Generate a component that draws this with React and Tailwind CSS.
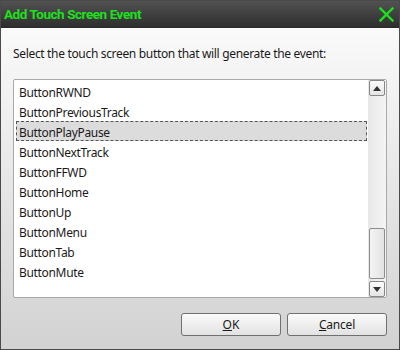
import React from "react";

const items = [
  "ButtonRWND",
  "ButtonPreviousTrack",
  "ButtonPlayPause",
  "ButtonNextTrack",
  "ButtonFFWD",
  "ButtonHome",
  "ButtonUp",
  "ButtonMenu",
  "ButtonTab",
  "ButtonMute",
];

function Arrow({ up }) {
  return (
    <svg width="8" height="5" viewBox="0 0 8 5">
      {up ? <polygon points="0,5 8,5 4,0" fill="#333" /> : <polygon points="0,0 8,0 4,5" fill="#333" />}
    </svg>
  );
}

export default function App() {
  return (
    <div
      className="w-[400px] h-[350px] flex flex-col border border-[#4a4a4a] bg-[linear-gradient(#fdfdfd,#d2d2d2)] overflow-hidden"
      style={{ fontFamily: '"Noto Sans", sans-serif' }}
    >
      <div className="h-[27px] flex items-center justify-between pl-[3px] pr-[5px] bg-[linear-gradient(#525252,#2e2e2e)] border-b border-[#2a2a2a]">
        <span
          className="text-[13.5px] font-bold text-[#1ee01e] leading-none pt-[1px] tracking-[-0.45px]"
          style={{ fontFamily: 'Roboto, sans-serif' }}
        >
          Add Touch Screen Event
        </span>
        <svg width="15" height="15" viewBox="0 0 15 15">
          <path d="M1.5 1.5 L13.5 13.5 M13.5 1.5 L1.5 13.5" stroke="#1ee01e" strokeWidth="2.4" strokeLinecap="square" />
        </svg>
      </div>
      <div className="flex-1 flex flex-col px-[12px]">
        <div className="mt-[17px] h-[18px] text-[12px] leading-[18px] text-[#1a1a1a] tracking-[-0.33px]">
          Select the touch screen button that will generate the event:
        </div>
        <div className="mt-[16px] h-[219px] flex border border-[#a8a8a8] rounded-[2px] bg-white">
          <div className="flex-1 flex flex-col pt-[1px] pl-[2px] pr-[1px]">
            {items.map((t) => (
              <div
                key={t}
                className={
                  "h-[20px] flex items-center pt-[3px] text-[12px] text-[#1a1a1a] tracking-[-0.33px] " +
                  (t === "ButtonPlayPause" ? "bg-[#dcdcdc] border border-dashed border-[#555] pl-[2px]" : "pl-[3px]")
                }
              >
                {t}
              </div>
            ))}
          </div>
          <div className="w-[18px] flex flex-col items-center bg-[linear-gradient(90deg,#e8e8e8,#f4f4f4)] pr-[1px]">
            <div className="w-[16px] h-[16px] flex items-center justify-center border border-[#888] rounded-[2px] bg-[linear-gradient(#fdfdfd,#e4e4e4)]">
              <Arrow up />
            </div>
            <div className="flex-1" />
            <div className="w-[16px] h-[51px] border border-[#8c8c8c] rounded-[2px] bg-[linear-gradient(90deg,#f4f4f4,#e2e2e2)]" />
            <div className="mt-[2px] w-[16px] h-[16px] flex items-center justify-center border border-[#888] rounded-[2px] bg-[linear-gradient(#fdfdfd,#e4e4e4)]">
              <Arrow />
            </div>
          </div>
        </div>
        <div className="mt-[15px] flex justify-end gap-[6px]">
          <button className="w-[100px] h-[23px] border border-[#707070] rounded-[3px] bg-[linear-gradient(#fbfbfb,#e2e2e2)] text-[12px] text-[#1a1a1a] leading-none">
            <span className="underline">O</span>K
          </button>
          <button className="w-[100px] h-[23px] border border-[#707070] rounded-[3px] bg-[linear-gradient(#fbfbfb,#e2e2e2)] text-[12px] text-[#1a1a1a] leading-none tracking-[-0.2px]">
            <span className="underline">C</span>ancel
          </button>
        </div>
      </div>
    </div>
  );
}
